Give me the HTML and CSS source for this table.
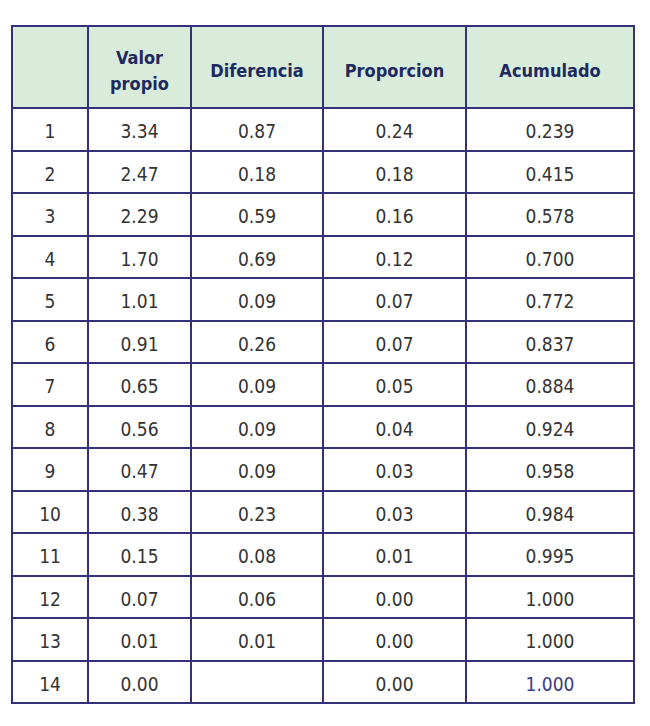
FILE: index.html
```html
<!DOCTYPE html>
<html lang="es">
<head>
<meta charset="utf-8">
<link rel="stylesheet" href="styles.css">
</head>
<body>
<table class="eig">
  <colgroup>
    <col class="c0"><col class="c1"><col class="c2"><col class="c3"><col class="c4">
  </colgroup>
  <thead>
    <tr><th></th><th>Valor<br>propio</th><th>Diferencia</th><th>Proporcion</th><th>Acumulado</th></tr>
  </thead>
  <tbody>
    <tr><td>1</td><td>3.34</td><td>0.87</td><td>0.24</td><td>0.239</td></tr>
    <tr><td>2</td><td>2.47</td><td>0.18</td><td>0.18</td><td>0.415</td></tr>
    <tr><td>3</td><td>2.29</td><td>0.59</td><td>0.16</td><td>0.578</td></tr>
    <tr><td>4</td><td>1.70</td><td>0.69</td><td>0.12</td><td>0.700</td></tr>
    <tr><td>5</td><td>1.01</td><td>0.09</td><td>0.07</td><td>0.772</td></tr>
    <tr><td>6</td><td>0.91</td><td>0.26</td><td>0.07</td><td>0.837</td></tr>
    <tr><td>7</td><td>0.65</td><td>0.09</td><td>0.05</td><td>0.884</td></tr>
    <tr><td>8</td><td>0.56</td><td>0.09</td><td>0.04</td><td>0.924</td></tr>
    <tr><td>9</td><td>0.47</td><td>0.09</td><td>0.03</td><td>0.958</td></tr>
    <tr><td>10</td><td>0.38</td><td>0.23</td><td>0.03</td><td>0.984</td></tr>
    <tr><td>11</td><td>0.15</td><td>0.08</td><td>0.01</td><td>0.995</td></tr>
    <tr><td>12</td><td>0.07</td><td>0.06</td><td>0.00</td><td>1.000</td></tr>
    <tr><td>13</td><td>0.01</td><td>0.01</td><td>0.00</td><td>1.000</td></tr>
    <tr><td>14</td><td>0.00</td><td></td><td>0.00</td><td class="blue">1.000</td></tr>
  </tbody>
</table>
</body>
</html>
```
FILE: styles.css
```css
html, body {
  margin: 0;
  padding: 0;
  background: #ffffff;
}
body {
  padding: 25px 0 0 11px;
  font-family: "DejaVu Sans Condensed", "DejaVu Sans", sans-serif;
  font-stretch: condensed;
}
.eig {
  border-collapse: collapse;
  table-layout: fixed;
  width: 622px;
  color: #333333;
}
.c0 { width: 76px; }
.c1 { width: 103px; }
.c2 { width: 132px; }
.c3 { width: 143px; }
.c4 { width: 168px; }
.eig th,
.eig td {
  border: 2px solid #34307a;
  text-align: center;
  vertical-align: middle;
}
.eig th {
  background: #d9ecdb;
  color: #1e2a5e;
  font-weight: bold;
  font-size: 18px;
  line-height: 26px;
  height: 72px;
  padding: 8px 0 0;
}
.eig td {
  font-size: 19px;
  height: 36.5px;
  line-height: 20px;
  padding: 4px 0 0;
}
.eig td.blue {
  color: #3a3c86;
}
```
